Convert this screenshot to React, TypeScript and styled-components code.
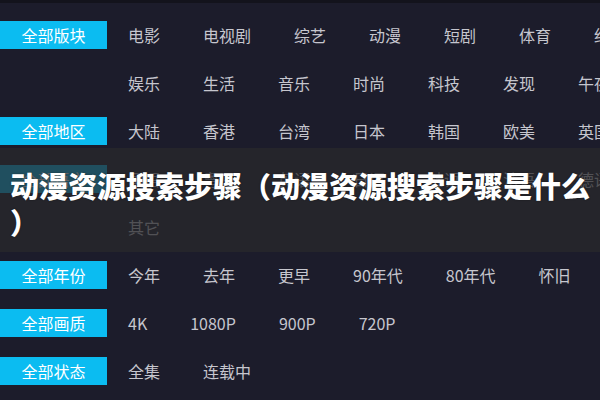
import styled, { createGlobalStyle } from "styled-components";

const GlobalStyle = createGlobalStyle`
  html, body {
    margin: 0;
    padding: 0;
    background: #1c1c2b;
  }
  * {
    box-sizing: border-box;
  }
`;

type Row = { label?: string; items: string[] };

const rows: Row[] = [
  { label: "全部版块", items: ["电影", "电视剧", "综艺", "动漫", "短剧", "体育", "纪录"] },
  { items: ["娱乐", "生活", "音乐", "时尚", "科技", "发现", "午夜"] },
  { label: "全部地区", items: ["大陆", "香港", "台湾", "日本", "韩国", "欧美", "英国"] },
  { label: "全部语言", items: ["国语", "粤语", "英语", "日语", "韩语", "法语", "德语"] },
  { items: ["其它"] },
  { label: "全部年份", items: ["今年", "去年", "更早", "90年代", "80年代", "怀旧"] },
  { label: "全部画质", items: ["4K", "1080P", "900P", "720P"] },
  { label: "全部状态", items: ["全集", "连载中"] },
];

export default function App() {
  return (
    <>
      <GlobalStyle />
      <Page>
        <TopStrip />
        <FilterList>
          {rows.map((row, i) => (
            <FilterRow key={i}>
              {row.label ? <Label>{row.label}</Label> : <LabelSpace />}
              <Items>
                {row.items.map((item) => (
                  <Item key={item}>{item}</Item>
                ))}
              </Items>
            </FilterRow>
          ))}
        </FilterList>
        <TitleBand>
          <Title>动漫资源搜索步骤（动漫资源搜索步骤是什么）</Title>
        </TitleBand>
      </Page>
    </>
  );
}

const Page = styled.div`
  position: relative;
  width: 600px;
  height: 400px;
  overflow: hidden;
  background: #1c1c2b;
  font-family: "Noto Sans CJK SC", "Noto Sans", sans-serif;
`;

const TopStrip = styled.div`
  height: 3px;
  background: #13131c;
`;

const FilterList = styled.div`
  display: flex;
  flex-direction: column;
  padding-top: 8px;
`;

const FilterRow = styled.div`
  display: flex;
  align-items: center;
  height: 48px;
  white-space: nowrap;
`;

const Label = styled.div`
  flex: 0 0 107px;
  height: 28px;
  display: flex;
  align-items: center;
  justify-content: center;
  background: #0bbcf1;
  color: #ffffff;
  font-size: 16px;
`;

const LabelSpace = styled.div`
  flex: 0 0 107px;
`;

const Items = styled.div`
  display: flex;
  gap: 43px;
  padding-left: 21px;
`;

const Item = styled.span`
  color: #c6c6ce;
  font-size: 16px;
  line-height: 20px;
`;

const TitleBand = styled.div`
  position: absolute;
  left: 0;
  top: 148px;
  width: 600px;
  height: 104px;
  background: rgba(40, 40, 43, 0.74);
  padding: 19px 0 0 10px;
`;

const Title = styled.div`
  color: #ffffff;
  font-size: 29px;
  font-weight: 900;
  line-height: 36px;
  line-break: anywhere;
  text-shadow: 0 0 2px rgba(0, 0, 0, 0.4);
`;
